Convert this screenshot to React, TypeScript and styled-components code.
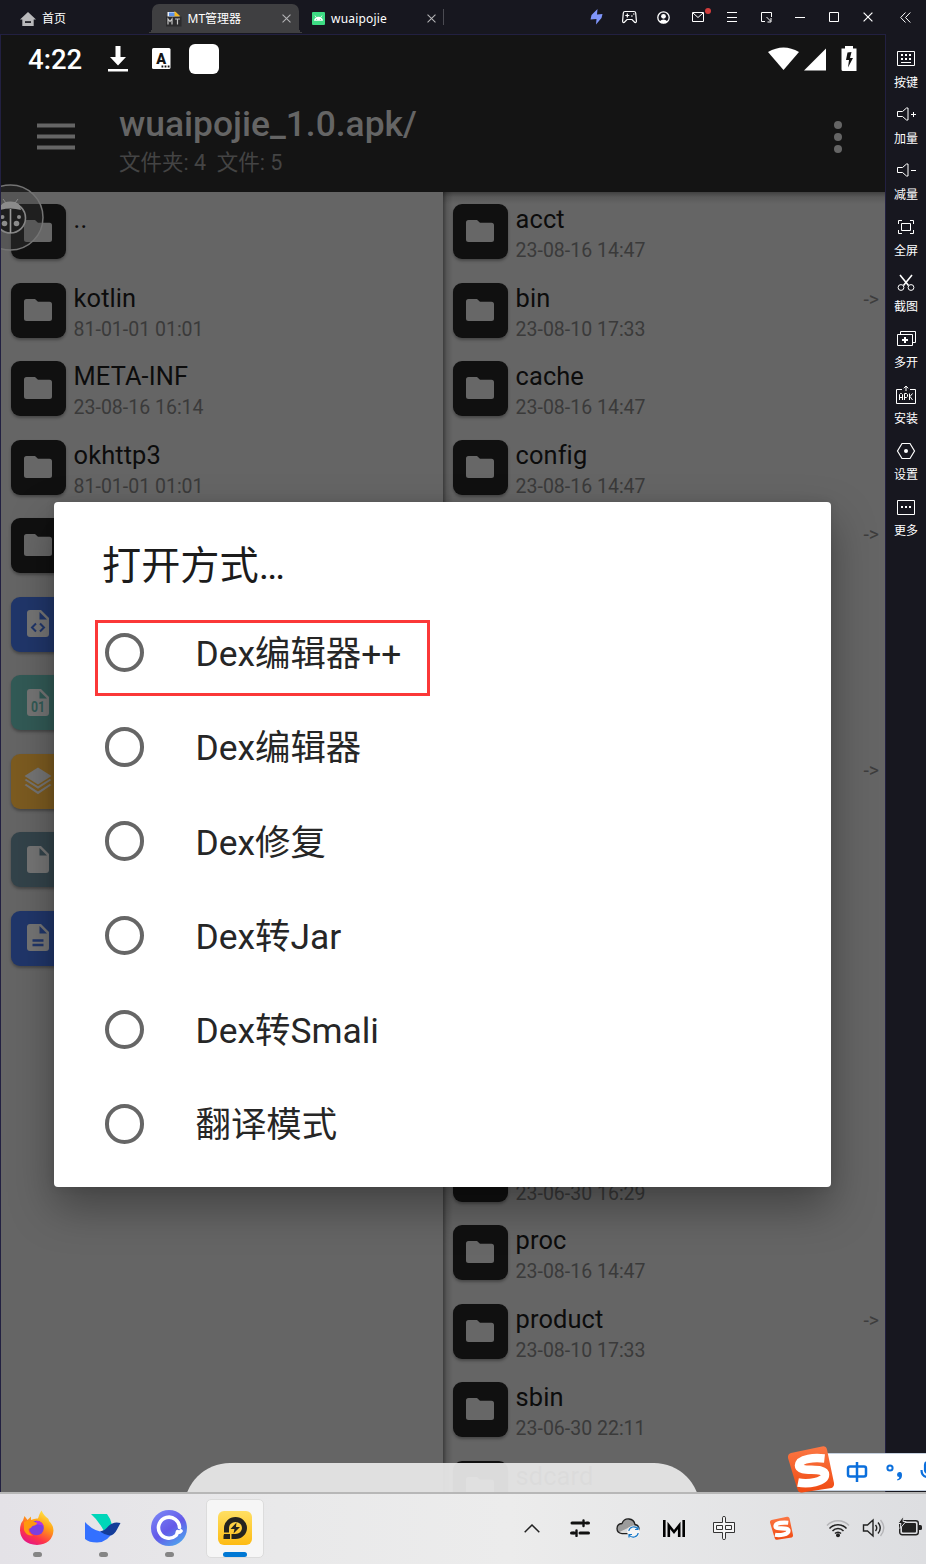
import React from "react";
import styled, { createGlobalStyle, css } from "styled-components";

const UI_FONT = `"Noto Sans", "Noto Sans CJK SC", sans-serif`;
const DROID_FONT = `Roboto, "Noto Sans CJK SC", sans-serif`;

const GlobalStyle = createGlobalStyle`
  *, *::before, *::after { box-sizing: border-box; }
  html, body { margin: 0; padding: 0; background: #17171f; }
  svg { display: block; flex: none; }
`;

const Desktop = styled.div`
  position: relative;
  display: flex;
  flex-direction: column;
  width: 926px;
  height: 1564px;
  overflow: hidden;
  background: #17171f;
  font-family: ${UI_FONT};
`;

/* ---------- emulator title bar ---------- */

const TitleBar = styled.header`
  display: flex;
  align-items: center;
  height: 34px;
  flex: none;
  color: #fff;
  font-size: 12px;
  line-height: 18px;
`;

const Tab = styled.div<{ $width: number; $left: number; $active?: boolean }>`
  position: relative;
  display: flex;
  align-items: center;
  gap: 6px;
  width: ${(p) => p.$width}px;
  height: 29px;
  margin-top: 3px;
  padding-left: ${(p) => p.$left}px;
  white-space: nowrap;
  ${(p) =>
    p.$active &&
    css`
      background: #3f3f41;
      border-radius: 7px 7px 0 0;
      &::before,
      &::after {
        content: "";
        position: absolute;
        bottom: 0;
        width: 5px;
        height: 5px;
      }
      &::before {
        left: -5px;
        background: radial-gradient(circle at 0 0, transparent 5px, #3f3f41 5px);
      }
      &::after {
        right: -5px;
        background: radial-gradient(circle at 100% 0, transparent 5px, #3f3f41 5px);
      }
    `}
`;

const TabLabel = styled.span<{ $spacing?: number }>`
  flex: 1;
  letter-spacing: ${(p) => p.$spacing ?? 0}px;
`;

const CloseSlot = styled.span`
  width: 17px;
`;

const TabDivider = styled.i`
  width: 1px;
  height: 16px;
  margin-left: -1px;
  background: #4b4b52;
`;

const WindowTools = styled.div`
  display: flex;
  align-items: center;
  margin-left: auto;
`;

const ToolSlot = styled.span<{ $w?: number }>`
  position: relative;
  display: flex;
  align-items: center;
  justify-content: center;
  width: ${(p) => p.$w ?? 34}px;
  height: 34px;
`;

const RedDot = styled.i`
  position: absolute;
  top: 8px;
  right: 4px;
  width: 6px;
  height: 6px;
  border-radius: 50%;
  background: #d23c3c;
`;

/* ---------- middle ---------- */

const Middle = styled.main`
  display: flex;
  height: 1458px;
  flex: none;
`;

const Phone = styled.section`
  position: relative;
  width: 886px;
  overflow: hidden;
  border: solid #222041;
  border-width: 1px 1px 0 1px;
  background: #656565;
  font-family: ${DROID_FONT};
`;

const StatusBar = styled.div`
  display: flex;
  align-items: center;
  height: 50px;
  padding: 0 27px 2px 27px;
  background: #141414;
  color: #fff;
`;

const Clock = styled.span`
  width: 80px;
  padding-top: 2px;
  font-size: 27.5px;
  font-weight: 500;
  line-height: 34px;
`;

const StatusIcons = styled.div`
  display: flex;
  align-items: center;
`;

const StatusRight = styled(StatusIcons)`
  margin-left: auto;
`;

const AppBar = styled.div`
  display: flex;
  align-items: center;
  height: 107px;
  padding: 0 37px 5px 36px;
  background: #141414;
`;

const AppTitles = styled.div`
  display: flex;
  flex-direction: column;
  flex: 1;
  padding-left: 44px;
  margin-top: 9px;
`;

const AppTitle = styled.h1`
  margin: 0;
  height: 41px;
  font-size: 35.4px;
  font-weight: 500;
  line-height: 41px;
  color: #656565;
`;

const AppSubtitle = styled.div`
  margin-top: 2px;
  margin-bottom: -1px;
  font-size: 21.5px;
  line-height: 32px;
  color: #444;
  white-space: pre;
`;

const Panes = styled.div`
  display: flex;
  height: 1300px;
`;

const Pane = styled.div<{ $shadow?: boolean }>`
  flex: 1;
  overflow: hidden;
  padding: 12px 0 0 10px;
  ${(p) =>
    p.$shadow &&
    css`
      background: linear-gradient(90deg, rgba(0, 0, 0, 0.4), rgba(0, 0, 0, 0.13) 4px, transparent 10px),
        linear-gradient(rgba(0, 0, 0, 0.36), rgba(0, 0, 0, 0.12) 5px, transparent 12px);
    `}
`;

const FileRow = styled.div`
  display: flex;
  height: 78.55px;
`;

const FileBadge = styled.div<{ $color: string }>`
  display: flex;
  align-items: center;
  justify-content: center;
  width: 55px;
  height: 55px;
  flex: none;
  padding: 0 2px 1px 0;
  border-radius: 9px;
  background: ${(p) => p.$color};
  box-shadow: 0 2px 3px rgba(0, 0, 0, 0.3);
`;

const FileText = styled.div`
  flex: 1;
  padding-left: 7.6px;
`;

const FileName = styled.div`
  height: 32px;
  font-size: 25.4px;
  line-height: 31px;
  letter-spacing: 0.1px;
  color: #0c0c0c;
`;

const FileDate = styled.div`
  font-size: 19.5px;
  line-height: 29px;
  color: #3a3a3a;
`;

const LinkArrow = styled.span`
  padding: 6px 6px 0 0;
  font-size: 19.5px;
  line-height: 22px;
  color: #3d3d3d;
`;

const Ladybug = styled.div`
  position: absolute;
  left: -24px;
  top: 149px;
  width: 67px;
  height: 67px;
`;

const Dialog = styled.div`
  position: absolute;
  left: 53px;
  top: 466.5px;
  width: 777px;
  height: 685.5px;
  padding: 38px 48px 0;
  border-radius: 4px;
  background: #fff;
  box-shadow: 0 20px 44px rgba(0, 0, 0, 0.34), 0 0 10px rgba(0, 0, 0, 0.1);
`;

const DialogTitle = styled.h2`
  margin: 0 0 17px;
  font-size: 39.2px;
  font-weight: 400;
  line-height: 52px;
  color: #1b1b1b;
`;

const Options = styled.div`
  margin-top: -3px;
`;

const Option = styled.div`
  display: flex;
  align-items: center;
  height: 94.25px;
  margin-left: 2.5px;
`;

const OptionLabel = styled.span`
  padding-top: 3px;
  font-size: 35.4px;
  line-height: 44px;
  color: #262626;
`;

const Radio = styled.i`
  width: 39.5px;
  height: 39.5px;
  margin-right: 51.5px;
  border: 4px solid #666;
  border-radius: 50%;
`;

const Highlight = styled.div`
  position: absolute;
  left: 41px;
  top: 118.5px;
  width: 335px;
  height: 76px;
  border: 3px solid #fb3838;
`;

const Sheet = styled.div`
  position: absolute;
  left: 183px;
  top: 1428px;
  width: 516px;
  height: 92px;
  border-radius: 46px;
  background: rgba(231, 231, 231, 0.95);
`;

/* ---------- side bar ---------- */

const SideBar = styled.aside`
  width: 40px;
  padding-top: 10px;
`;

const SideItem = styled.div`
  display: flex;
  flex-direction: column;
  align-items: center;
  height: 56px;
  color: #fff;
  font-size: 12px;
  line-height: 18px;
`;

const SideIcon = styled.div`
  display: flex;
  align-items: center;
  height: 30px;
`;

/* ---------- input method bar ---------- */

const ImeBar = styled.div`
  position: absolute;
  left: 810px;
  top: 1453px;
  display: flex;
  align-items: center;
  gap: 17px;
  width: 134px;
  height: 38px;
  padding-left: 35px;
  border: 1px solid #c6d1df;
  background: #fff;
`;

const ImeLogo = styled.div`
  position: absolute;
  left: 786px;
  top: 1445px;
`;

/* ---------- task bar ---------- */

const TaskBar = styled.footer`
  display: flex;
  height: 72px;
  flex: none;
  border-top: 2px solid #b7b7b7;
  background: linear-gradient(90deg, #e4e2e7, #e9e9ea 30%, #ececec 55%, #dddee1);
`;

const AppSlots = styled.div`
  display: flex;
  gap: 8px;
  padding: 5px 0 0 8px;
`;

const AppSlot = styled.div<{ $active?: boolean }>`
  display: flex;
  flex-direction: column;
  align-items: center;
  width: 58px;
  height: 59px;
  padding-top: 10px;
  border-radius: 5px;
  border: 1px solid ${(p) => (p.$active ? "#dcdcdc" : "transparent")};
  background: ${(p) => (p.$active ? "#f6f6f6" : "transparent")};
`;

const RunMark = styled.i<{ $active?: boolean }>`
  width: ${(p) => (p.$active ? 24 : 9)}px;
  height: 5px;
  margin-top: 6px;
  border-radius: 3px;
  background: ${(p) => (p.$active ? "#0078d4" : "#858585")};
`;

const Tray = styled.div`
  display: flex;
  margin-left: auto;
  height: 68px;
`;

const TraySlot = styled.span<{ $w: number }>`
  display: flex;
  align-items: center;
  justify-content: center;
  width: ${(p) => p.$w}px;
`;

/* ---------- icons ---------- */

const CloseIcon = ({ size = 9, color = "#b4b4b6" }: { size?: number; color?: string }) => (
  <svg width={size} height={size} viewBox="0 0 10 10" stroke={color} strokeWidth="1.2">
    <path d="M.6.6 9.4 9.4M9.4.6.6 9.4" />
  </svg>
);

const HomeIcon = () => (
  <svg width="16" height="14" viewBox="0 0 16 14">
    <path fill="#b9b9bb" d="M8 0 0 7.4h2.3V14h11.4V7.4H16z" />
    <path fill="#17171f" d="M5 9.2h6v1.7H5z" />
  </svg>
);

const MtIcon = () => (
  <svg width="16" height="16" viewBox="0 0 16 16">
    <path fill="#eef2f8" d="M1.5 1h8l4 4v2h-12z" />
    <path fill="#5b92ea" d="M3 1.5h6V5H3z" />
    <path fill="#f6b71d" d="M8.5 0l6 5.5h-6z" />
    <path fill="#2b2b2d" d="M0 5.5h15.5v10H0z" />
    <path stroke="#c4c4c4" strokeWidth="1.2" fill="none" d="M2 13.5V8l2 2.5L6 8v5.500M9 8h5M11.5 8v5.500" />
  </svg>
);

const AndroidIcon = () => (
  <svg width="13" height="13" viewBox="0 0 13 13">
    <rect width="13" height="13" rx="1" fill="#3ddc84" />
    <path fill="#fff" d="M2 8.8a4.5 4 0 0 1 9 0z" />
    <path stroke="#fff" strokeWidth=".8" d="m3 3.600 1.200 1.800M10 3.600 8.800 5.400" />
    <circle cx="4.6" cy="7.4" r=".5" fill="#3ddc84" />
    <circle cx="8.4" cy="7.4" r=".5" fill="#3ddc84" />
  </svg>
);

const FolderGlyph = () => (
  <svg width="28" height="22" viewBox="0 0 28 22">
    <path fill="#676767" d="M2.500 0H11l3 2.700h11.500Q28 2.700 28 5.200V19.500Q28 22 25.500 22H2.500Q0 22 0 19.500V2.500Q0 0 2.500 0Z" />
  </svg>
);

type Kind = "folder" | "code" | "binary" | "layers" | "blank" | "text";

const BADGE: Record<Kind, string> = {
  folder: "#101010",
  code: "#20366a",
  binary: "#325a56",
  layers: "#7c5b20",
  blank: "#33434a",
  text: "#20366a",
};

const GLYPH = "#757575";

const Glyph = ({ kind }: { kind: Kind }) => {
  if (kind === "folder") return <FolderGlyph />;
  if (kind === "layers")
    return (
      <svg width="28" height="28" viewBox="0 0 28 28" fill={GLYPH}>
        <path d="m14 .500 13.500 8.500L14 17.500.5 9z" />
        <path d="m.5 13 1.800-1L14 19.200 25.700 12l1.800 1L14 21.800z" />
        <path d="m.5 18 1.800-1L14 24.500 25.700 17l1.800 1L14 27.300z" />
      </svg>
    );
  const c = BADGE[kind];
  return (
    <svg width="22" height="27" viewBox="0 0 22 27">
      <path fill={GLYPH} d="M3 0h11l8 8v16q0 3-3 3H3q-3 0-3-3V3q0-3 3-3z" />
      <path fill={c} d="M12.500 2v7.500H20z" />
      {kind === "code" && <path d="m9 13.500-4 4 4 4m4-8 4 4-4 4" fill="none" stroke={c} strokeWidth="2" />}
      {kind === "text" && <path d="M5.500 16.500h11M5.500 21h11" stroke={c} strokeWidth="2.400" />}
      {kind === "binary" && (
        <text x="11" y="23" textAnchor="middle" fontSize="14" fontWeight="700" fontFamily="Roboto, sans-serif" textLength="14" lengthAdjust="spacingAndGlyphs" fill={c}>
          01
        </text>
      )}
    </svg>
  );
};

const SogouMark = ({ size }: { size: number }) => (
  <svg width={size} height={size} viewBox="0 0 50 50">
    <defs>
      <linearGradient id={`sogou${size}`} x2="0" y2="1">
        <stop offset="0" stopColor="#fb7744" />
        <stop offset="1" stopColor="#f04a12" />
      </linearGradient>
    </defs>
    <path
      fill={`url(#sogou${size})`}
      d="M5 8 36 1.500q4-.8 5 3L48 38q.5 3.500-2.500 5L16 47.500q-3.500.5-4.500-3L2 13q-.5-4 3-5z"
    />
    <path
      fill="none"
      stroke="#fff"
      strokeWidth="8.500"
      d="M38.500 13.500C29 12.500 13.500 13 13 20.500c0 8 25.500.5 26 9 0 7.500-17 10-27 8"
    />
  </svg>
);

/* ---------- data ---------- */

type Entry = { name?: string; date?: string; kind?: Kind; link?: boolean };

const LEFT: Entry[] = [
  { name: ".." },
  { name: "kotlin", date: "81-01-01 01:01" },
  { name: "META-INF", date: "23-08-16 16:14" },
  { name: "okhttp3", date: "81-01-01 01:01" },
  {},
  { kind: "code" },
  { kind: "binary" },
  { kind: "layers" },
  { kind: "blank" },
  { kind: "text" },
];

const RIGHT: Entry[] = [
  { name: "acct", date: "23-08-16 14:47" },
  { name: "bin", date: "23-08-10 17:33", link: true },
  { name: "cache", date: "23-08-16 14:47" },
  { name: "config", date: "23-08-16 14:47" },
  { link: true },
  {},
  {},
  { link: true },
  {},
  {},
  {},
  {},
  { date: "23-06-30 16:29" },
  { name: "proc", date: "23-08-16 14:47" },
  { name: "product", date: "23-08-10 17:33", link: true },
  { name: "sbin", date: "23-06-30 22:11" },
  { name: "sdcard" },
];

const CHOICES = ["Dex编辑器++", "Dex编辑器", "Dex修复", "Dex转Jar", "Dex转Smali", "翻译模式"];

const Files = ({ items }: { items: Entry[] }) => (
  <>
    {items.map((f, i) => (
      <FileRow key={i}>
        <FileBadge $color={BADGE[f.kind ?? "folder"]}>
          <Glyph kind={f.kind ?? "folder"} />
        </FileBadge>
        <FileText>
          <FileName>{f.name}</FileName>
          <FileDate>{f.date}</FileDate>
        </FileText>
        {f.link && <LinkArrow>-&gt;</LinkArrow>}
      </FileRow>
    ))}
  </>
);

const Line = ({ w = 20, h = 20, children }: { w?: number; h?: number; children: React.ReactNode }) => (
  <svg width={w} height={h} viewBox={`0 0 ${w} ${h}`} fill="none" stroke="#fff" strokeWidth="1">
    {children}
  </svg>
);

const SPEAKER = "M1.500 6.500h5l4-3.500h1.500v12h-1.500l-4-3.500h-5z";

const SIDE: { label: string; icon: React.ReactNode }[] = [
  {
    label: "按键",
    icon: (
      <Line>
        <path d="M1.500 2.500h17v14h-17z" />
        <path strokeWidth="2" strokeDasharray="2 2" d="M5 6h10M5 10h10" />
        <path d="M5 13.500h10" />
      </Line>
    ),
  },
  {
    label: "加量",
    icon: (
      <Line>
        <path d={SPEAKER} />
        <path d="M15 9.500h5M17.500 7v5" />
      </Line>
    ),
  },
  {
    label: "减量",
    icon: (
      <Line>
        <path d={SPEAKER} />
        <path d="M15 9.500h5" />
      </Line>
    ),
  },
  {
    label: "全屏",
    icon: (
      <Line>
        <path d="M5.500 6.500h9v7h-9zM2.500 7V3.500H6M14 3.500h3.500V7M2.500 13v3.500H6M14 16.500h3.500V13" />
      </Line>
    ),
  },
  {
    label: "截图",
    icon: (
      <Line>
        <path strokeWidth="1.600" d="m4 2 8.500 10.500M16 2 7.500 12.500" />
        <circle cx="5" cy="14.500" r="2.900" />
        <circle cx="15" cy="14.500" r="2.900" />
      </Line>
    ),
  },
  {
    label: "多开",
    icon: (
      <Line>
        <path d="M1.500 5.500h15v11h-15zM4.500 5V2.500h15v11H17" />
        <path strokeWidth="2" d="M6 11h6M9 8v6" />
      </Line>
    ),
  },
  {
    label: "安装",
    icon: (
      <Line>
        <path d="M6 4.500H.5v14h19v-14H14M10 6V1M7.800 3.300 10 1l2.200 2.300" />
        <path d="M3.500 15V9.500L4.500 8.500h1l1 1V15M3.500 12.500h3M8.500 15V8.500h2l1 1v2l-1 1h-2M13.500 8.500V15M16.500 8.500l-2.500 3 2.500 3.500" />
      </Line>
    ),
  },
  {
    label: "设置",
    icon: (
      <Line>
        <path strokeWidth="1.200" d="M6 2.500h8l4.500 7.500-4.500 7.500H6L1.500 10z" />
        <circle cx="10" cy="10" r="2" fill="#fff" stroke="none" />
      </Line>
    ),
  },
  {
    label: "更多",
    icon: (
      <Line>
        <path d="M1.500 3.500h17v14h-17z" />
        <path strokeWidth="2" strokeDasharray="2 2" d="M5 10h10" />
      </Line>
    ),
  },
];

export default function App() {
  return (
    <Desktop>
      <GlobalStyle />
      <TitleBar>
        <Tab $width={152} $left={20}>
          <HomeIcon />
          <TabLabel>首页</TabLabel>
        </Tab>
        <Tab $width={147} $left={13.500} $active>
          <MtIcon />
          <TabLabel>MT管理器</TabLabel>
          <CloseSlot>
            <CloseIcon />
          </CloseSlot>
        </Tab>
        <Tab $width={145} $left={13}>
          <AndroidIcon />
          <TabLabel $spacing={0.2}>wuaipojie</TabLabel>
          <CloseSlot>
            <CloseIcon />
          </CloseSlot>
        </Tab>
        <TabDivider />
        <WindowTools>
          <ToolSlot $w={32}>
            <svg width="13" height="16" viewBox="0 0 13 16">
              <path fill="#7f95fb" d="M7.500 0 7 5.500l5.500-.5-1 4-5.500 6.500.5-5.500-6 .5L1.500 6z" />
            </svg>
          </ToolSlot>
          <ToolSlot>
            <svg width="15" height="14" viewBox="0 0 15 14" fill="none" stroke="#fff" strokeWidth="1.200">
              <path d="M3 1.500h9q1.500 0 1.700 1.500l.7 8q0 2-1.600 1.500L10 9.500H5l-2.800 3Q.6 13 .6 11l.7-8Q1.500 1.500 3 1.500z" />
              <path d="M3.300 5.500h4M5.300 3.500v4M9 6h1.700M11 4h1.500" />
            </svg>
          </ToolSlot>
          <ToolSlot $w={35}>
            <svg width="13" height="13" viewBox="0 0 13 13">
              <circle cx="6.500" cy="6.500" r="5.700" fill="none" stroke="#fff" strokeWidth="1.300" />
              <circle cx="6.500" cy="5.300" r="2.400" fill="#fff" />
              <path fill="#fff" d="M2.500 10.500q4-4 8 0-4 3.500-8 0z" />
            </svg>
          </ToolSlot>
          <ToolSlot $w={34}>
            <Line w={12} h={12}>
              <path d="M.5 1.500h11v9H.5zM1 2l5 4.500L11 2" />
            </Line>
            <RedDot />
          </ToolSlot>
          <ToolSlot>
            <Line w={10} h={10}>
              <path d="M0 .5h10M0 5.500h10M0 9.500h10" />
            </Line>
          </ToolSlot>
          <ToolSlot>
            <Line w={12} h={12}>
              <path d="M5 10.500H1.500v-9h10V6M6.500 6l4 4M11 7v4H7.500" />
            </Line>
          </ToolSlot>
          <ToolSlot>
            <Line w={10} h={10}>
              <path d="M0 5.500h10" />
            </Line>
          </ToolSlot>
          <ToolSlot>
            <Line w={10} h={10}>
              <path d="M.5.5h9v9h-9z" />
            </Line>
          </ToolSlot>
          <ToolSlot>
            <CloseIcon size={10} color="#fff" />
          </ToolSlot>
          <ToolSlot $w={41}>
            <Line w={11} h={12}>
              <path d="M5.500 1.500.7 6.500l4.800 5M10.300 1.500 5.500 6.500l4.800 5" />
            </Line>
          </ToolSlot>
        </WindowTools>
      </TitleBar>

      <Middle>
        <Phone>
          <StatusBar>
            <Clock>4:22</Clock>
            <StatusIcons>
              <svg width="20" height="26" viewBox="0 0 20 26" fill="#fff">
                <path d="M7.500 0h5v11H18l-8 8.500L2 11h5.500zM0 23h20v2.500H0z" />
              </svg>
              <svg width="61" height="22" viewBox="-24 0 61 22">
                <rect width="18.500" height="21" rx="1.500" fill="#fff" />
                <text x="9.250" y="15.500" textAnchor="middle" fontSize="14.500" fontWeight="900" fontFamily="Roboto, sans-serif" fill="#141414">
                  A
                </text>
                <path stroke="#141414" strokeWidth="1.800" strokeDasharray="1.800 1.300" d="M9.500 18.500h8" />
              </svg>
              <svg width="30" height="30" viewBox="0 0 30 30">
                <rect width="30" height="30" rx="6" fill="#fff" />
              </svg>
            </StatusIcons>
            <StatusRight>
              <svg width="90" height="27" viewBox="0 0 90 27" fill="#fff">
                <path d="M0 6Q15.500-3 31 6L15.500 24z" />
                <path d="M36 24.500h22V2.500z" />
                <path d="M73.500 2.500h3.500V0h8v2.500h3.500V25H75q-1.500 0-1.500-1.500z" />
                <path fill="#141414" d="m79.500 6.500 4-.5-1.500 6h3l-5 9.500 1-7.500h-3z" />
              </svg>
            </StatusRight>
          </StatusBar>

          <AppBar>
            <svg width="38" height="27" viewBox="0 0 38 27" stroke="#656565" strokeWidth="4">
              <path d="M0 2.500h38M0 13.500h38M0 24.500h38" />
            </svg>
            <AppTitles>
              <AppTitle>wuaipojie_1.0.apk/</AppTitle>
              <AppSubtitle>{"文件夹: 4  文件: 5"}</AppSubtitle>
            </AppTitles>
            <svg width="20" height="34" viewBox="0 0 20 34" fill="#656565">
              <circle cx="10" cy="6" r="4" />
              <circle cx="10" cy="18" r="4" />
              <circle cx="10" cy="30" r="4" />
            </svg>
          </AppBar>

          <Panes>
            <Pane>
              <Files items={LEFT} />
            </Pane>
            <Pane $shadow>
              <Files items={RIGHT} />
            </Pane>
          </Panes>

          <Ladybug>
            <svg width="67" height="67" viewBox="0 0 67 67">
              <circle cx="33.500" cy="33.500" r="32.500" fill="rgba(60,60,60,.35)" stroke="#747474" strokeWidth="1.500" />
              <circle cx="33.500" cy="34" r="15" fill="#1e1e1e" stroke="#858585" strokeWidth="1.600" />
              <path d="M23 26q0-8.500 10.500-8.500T44 26q-10.500-3-21 0z" fill="#8b8b8b" />
              <path d="m26 15 3 4M41 15l-3 4" stroke="#8b8b8b" />
              <path d="M33.500 25v24" stroke="#999" strokeWidth="1.600" />
              <g fill="#8b8b8b">
                <circle cx="25.500" cy="33" r="2" />
                <circle cx="42" cy="33" r="2" />
                <circle cx="27.500" cy="39.500" r="2.800" />
                <circle cx="39.500" cy="39.500" r="2.800" />
              </g>
            </svg>
          </Ladybug>

          <Dialog>
            <DialogTitle>打开方式…</DialogTitle>
            <Options>
              {CHOICES.map((c) => (
                <Option key={c}>
                  <Radio />
                  <OptionLabel>{c}</OptionLabel>
                </Option>
              ))}
            </Options>
            <Highlight />
          </Dialog>
          <Sheet />
        </Phone>

        <SideBar>
          {SIDE.map((s) => (
            <SideItem key={s.label}>
              <SideIcon>{s.icon}</SideIcon>
              {s.label}
            </SideItem>
          ))}
        </SideBar>
      </Middle>

      <TaskBar>
        <AppSlots>
          <AppSlot>
            <svg width="36" height="36" viewBox="0 0 36 36">
              <defs>
                <linearGradient id="fox" x1=".85" y1="0" x2=".3" y2="1">
                  <stop offset="0" stopColor="#fff44f" />
                  <stop offset=".4" stopColor="#ffa015" />
                  <stop offset=".75" stopColor="#ff3647" />
                  <stop offset="1" stopColor="#e31587" />
                </linearGradient>
              </defs>
              <path
                fill="url(#fox)"
                d="M22.500.5q2.500 5.500 6.500 8 1 1 1 2.500 4.500 4 4.500 9.500Q33.500 34 18 35 2 34 1 20.500q0-7 3-10L5.500 6l3 4 3.500-3.500v3.500q4-2 7-1.500Q20 4 22.500.5z"
              />
              <circle cx="17.500" cy="18" r="7.300" fill="#7a3fe0" />
              <path fill="#b833e1" d="M17 10.700q6 0 8 6-3-3-8-2z" />
              <path fill="#ff980e" d="M5 12q4-2.500 8-1.500l5 2.500q0 2-4.500 3-1.500 2.500-4 3Q9.500 23 14 25.500 7 26 5 20z" />
            </svg>
            <RunMark />
          </AppSlot>
          <AppSlot>
            <svg width="36" height="36" viewBox="0 0 36 36">
              <path fill="#00d6b9" d="M6 4h16q4 5 5 11l-8 6Q13 10 6 4z" />
              <path fill="#3370ff" d="M0 12q10 11 22 10l7-2q-6 12.500-17 12.500Q4 32.500 0 29z" />
              <path fill="#133c9a" d="M15 21.500q5-1 8.500-5.500 5-5 12-3L32 19.500q-3 6-7.500 6-4.500-.5-9.500-4z" />
            </svg>
            <RunMark />
          </AppSlot>
          <AppSlot>
            <svg width="36" height="36" viewBox="0 0 36 36">
              <defs>
                <linearGradient id="ring" x2=".7" y2="1">
                  <stop offset="0" stopColor="#7d8cf8" />
                  <stop offset=".6" stopColor="#6459e8" />
                  <stop offset="1" stopColor="#4fa0ee" />
                </linearGradient>
              </defs>
              <circle cx="18" cy="18" r="18" fill="url(#ring)" />
              <path
                d="M28.500 17.500a10.500 10.500 0 1 0-3.500 8q1-1 1.500-4 2 1.500 3.500-.5"
                fill="none"
                stroke="#fff"
                strokeWidth="3.600"
                strokeLinecap="round"
                strokeLinejoin="round"
              />
            </svg>
            <RunMark />
          </AppSlot>
          <AppSlot $active>
            <svg width="36" height="36" viewBox="0 0 36 36">
              <defs>
                <linearGradient id="ld" x2="0" y2="1">
                  <stop offset="0" stopColor="#ffdf63" />
                  <stop offset="1" stopColor="#fdbb13" />
                </linearGradient>
              </defs>
              <rect x="1" y="1" width="34" height="34" rx="6" fill="url(#ld)" />
              <path d="M9.500 22.500V18A9 8.500 0 1 1 18.500 26.500H14.500" fill="none" stroke="#25231f" strokeWidth="5" />
              <path fill="#25231f" d="M7 24h6v5H6.500v-3zM19.500 12.500 13.500 19h4l-1 4.500L23 17h-4z" />
            </svg>
            <RunMark $active />
          </AppSlot>
        </AppSlots>

        <Tray>
          <TraySlot $w={26}>
            <svg width="16" height="9" viewBox="0 0 16 9" fill="none" stroke="#222" strokeWidth="1.500">
              <path d="m.7 8.300 7.300-7.300 7.300 7.300" />
            </svg>
          </TraySlot>
          <TraySlot $w={70}>
            <svg width="20" height="18" viewBox="0 0 20 18" stroke="#111" strokeLinecap="round">
              <path strokeWidth="3" d="M2 4h10M17 4h1.500M1.500 14H4M10 14h8.500" />
              <path strokeWidth="2.400" d="M13.500 1.500v5.500M17 4h-3M6.500 11.500V17M3 14h3" />
            </svg>
          </TraySlot>
          <TraySlot $w={25}>
            <svg width="24" height="22" viewBox="0 0 24 22">
              <path
                d="M6 16.500q-5-.5-5-5T6 6.500Q8 1.500 13 2t6 5.500q4 .5 4 4.500t-5 4.500z"
                fill="#9c9c9c"
                stroke="#1f1f1f"
                strokeWidth="1.300"
              />
              <path d="M3.500 15 17 8.500q5 .5 5 3t-4 4.500H6z" fill="#dcdcdc" />
              <circle cx="17.500" cy="15" r="6.300" fill="#f5f5f5" />
              <path
                d="M12.800 14a5 5 0 0 1 9-2M22.200 16a5 5 0 0 1-9 2M22 9.500v3h-3M13 20.500v-3h3"
                fill="none"
                stroke="#1778c8"
                strokeWidth="1.200"
              />
            </svg>
          </TraySlot>
          <TraySlot $w={68}>
            <svg width="22" height="17" viewBox="0 0 22 17" fill="none" stroke="#000" strokeWidth="2.600">
              <path d="M1.300 0v17M20.700 0v17" />
              <path d="M5.800 17V5.500L11 12l5.200-6.500V17" />
            </svg>
          </TraySlot>
          <TraySlot $w={31}>
            <svg width="22" height="24" viewBox="0 0 22 24" fill="#f5f5f5" stroke="#333" strokeWidth="1">
              <path d="M9.500 1.500q0-1 1.500-1t1.500 1V6.500h9v10h-9v6q0 1-1.500 1t-1.500-1v-6h-9v-10h9z" />
              <path d="M3.500 9.500h6v4h-6zM12.500 9.500h6v4h-6z" />
            </svg>
          </TraySlot>
          <TraySlot $w={84}>
            <SogouMark size={25} />
          </TraySlot>
          <TraySlot $w={30}>
            <svg width="24" height="20" viewBox="0 0 24 20" fill="none" strokeWidth="1.500">
              <path stroke="#b5b5b8" d="M1 7.500a15 15 0 0 1 22 0" />
              <path stroke="#222" d="M3.500 10.500a11.500 11.500 0 0 1 17 0M6.500 13a7.500 7.500 0 0 1 11 0M9 15.500a4 4 0 0 1 6 0" />
              <circle cx="12" cy="17.300" r="2" fill="#222" />
            </svg>
          </TraySlot>
          <TraySlot $w={41}>
            <svg width="24" height="20" viewBox="0 0 24 20" fill="none" stroke="#222" strokeWidth="1.400">
              <path d="M1.500 7h4L11 2v16l-5.500-5h-4z" />
              <path d="M13.500 7q2.500 3 0 6M16 4.500q4.500 5.500 0 11" />
              <path stroke="#b5b5b8" d="M18.500 2q6.500 8 0 16" />
            </svg>
          </TraySlot>
          <TraySlot $w={32}>
            <svg width="25" height="24" viewBox="0 0 25 24">
              <rect x="1.700" y="4.700" width="18.600" height="14" rx="2.500" fill="none" stroke="#222" strokeWidth="1.400" />
              <rect x="4" y="7" width="14" height="9.500" rx="1" fill="#222" />
              <path fill="#222" d="M21 9h1.500Q24 9 24 10.500v2q0 1.500-1.500 1.500H21z" />
              <path fill="#222" stroke="#dedfe2" strokeWidth="1" d="M5.500 0 0 7.500h3L2 12.500l6-7H5z" />
            </svg>
          </TraySlot>
        </Tray>
      </TaskBar>

      <ImeBar>
        <svg width="22" height="22" viewBox="0 0 22 22" fill="none" stroke="#0b6fdc" strokeWidth="2.500">
          <path d="M4 5.500h14q2 0 2 2v6q0 2-2 2H4q-2 0-2-2v-6q0-2 2-2zM11 1v20" />
        </svg>
        <svg width="18" height="18" viewBox="0 0 18 18">
          <circle cx="5" cy="5" r="2.600" fill="none" stroke="#0b6fdc" strokeWidth="2" />
          <path fill="#0b6fdc" d="M12 16.500q2.500-1 2.300-2.500-2.300 0-2.300-2.300T14.500 9t2.500 3.200q0 4.300-4.500 5.300z" />
        </svg>
        <svg width="16" height="22" viewBox="0 0 16 22" fill="none" stroke="#0b6fdc" strokeWidth="2.200">
          <path d="M1.500 9q0 7 6.500 7t6.500-7M8 16v5" />
          <rect x="5" y="1" width="6" height="11" rx="3" fill="#0b6fdc" />
        </svg>
      </ImeBar>
      <ImeLogo>
        <SogouMark size={50} />
      </ImeLogo>
    </Desktop>
  );
}
